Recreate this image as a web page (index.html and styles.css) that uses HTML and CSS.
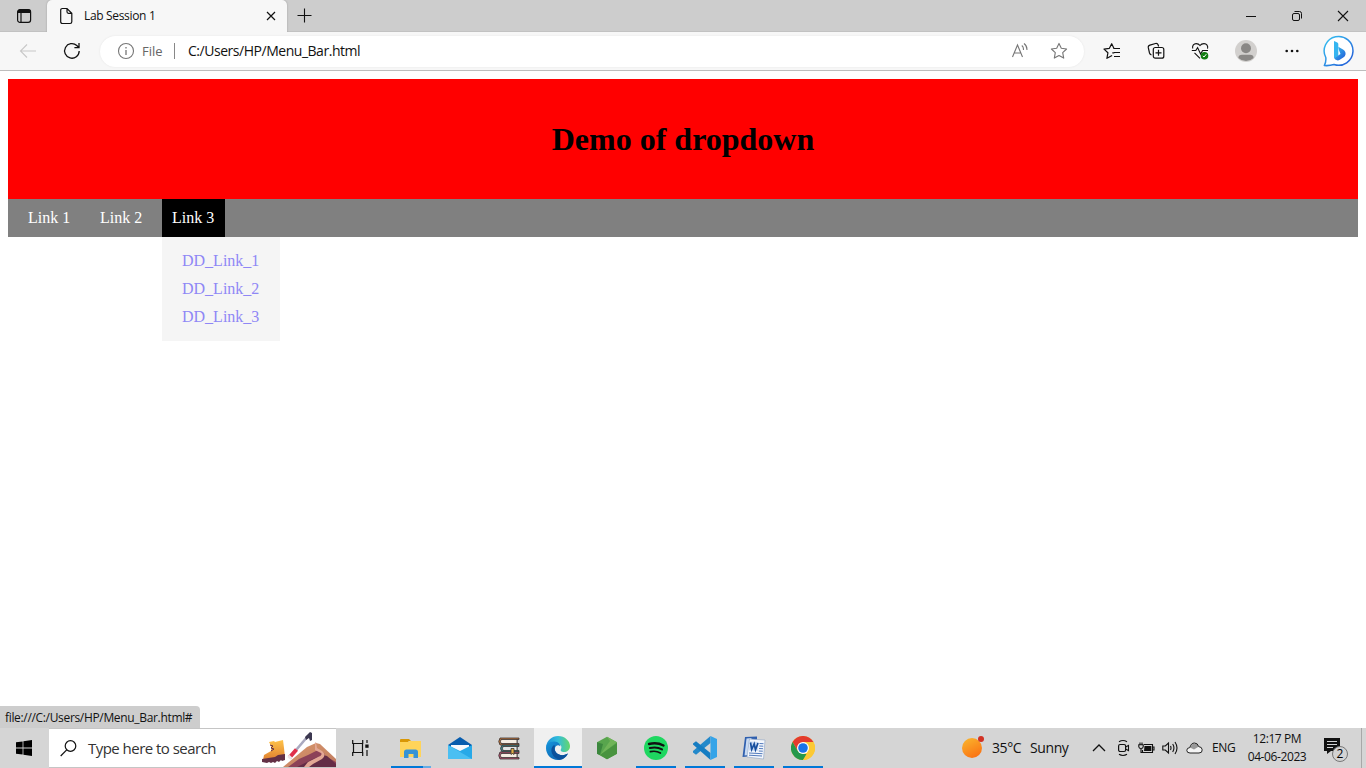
FILE: index.html
```html
<!DOCTYPE html>
<html lang="en">
<head>
<meta charset="utf-8">
<title>Lab Session 1</title>
<link rel="stylesheet" href="styles.css">
</head>
<body>
<div class="screen">
  <header class="tabstrip">
    <svg class="ic workspaces" width="16" height="16" viewBox="0 0 16 16"><rect x="1.6" y="1.6" width="13" height="12.8" rx="2.4" fill="none" stroke="#111" stroke-width="1.2"/><path d="M1.500 5V3.500q0-2 2-2h9.500q2 0 2 2V5z" fill="#111"/><path d="M5 5v9" stroke="#111" stroke-width="1.2"/></svg>
    <div class="tab">
      <svg class="ic" width="14" height="18" viewBox="0 0 14 18"><path d="M1.700 3.200q0-1.700 1.700-1.700H8l4.800 4.800v8.500q0 1.700-1.700 1.700H3.400q-1.700 0-1.700-1.700zM8 1.500v3.300q0 1.500 1.500 1.500h3.300" fill="none" stroke="#111" stroke-width="1.200"/></svg>
      <span class="tab-title">Lab Session 1</span>
      <svg class="ic tab-close" width="10" height="10" viewBox="0 0 10 10"><path d="M1 1l8 8M9 1L1 9" stroke="#111" stroke-width="1.200"/></svg>
    </div>
    <svg class="ic newtab" width="15" height="15" viewBox="0 0 15 15"><path d="M.5 7.500h14M7.500.5v14" stroke="#111" stroke-width="1.100"/></svg>
    <div class="window-controls">
      <svg width="12" height="12" viewBox="0 0 12 12"><path d="M1 6.500h10" stroke="#111"/></svg>
      <svg width="12" height="12" viewBox="0 0 12 12"><rect x="1.500" y="3.500" width="7" height="7" rx="1.500" fill="none" stroke="#111"/><path d="M3.500 1.500h5q2 0 2 2v5" fill="none" stroke="#111"/></svg>
      <svg width="12" height="12" viewBox="0 0 12 12"><path d="M1 1l10 10M11 1L1 11" stroke="#111" stroke-width="1.100"/></svg>
    </div>
  </header>

  <div class="toolbar">
    <svg class="ic back" width="18" height="16" viewBox="0 0 18 16"><path d="M8 1.500L1.500 8 8 14.500M1.500 8H17" fill="none" stroke="#c8c8c8" stroke-width="1.100"/></svg>
    <svg class="ic reload" width="18" height="18" viewBox="0 0 18 18"><path d="M16.200 9a7.300 7.300 0 1 1-2.400-5.500l2 2M16 1v4.600h-4.600" fill="none" stroke="#111" stroke-width="1.300"/></svg>
    <div class="address">
      <svg class="ic" width="18" height="18" viewBox="0 0 18 18"><circle cx="9" cy="9" r="7.500" fill="none" stroke="#767676" stroke-width="1.100"/><path d="M9 8v5M9 5v1.500" stroke="#767676" stroke-width="1.300"/></svg>
      <span class="scheme">File</span>
      <span class="divider"></span>
      <span class="url">C:/Users/HP/Menu_Bar.html</span>
      <svg class="ic read" width="18" height="18" viewBox="0 0 18 18"><path d="M1.500 15L6.500 3l5 12M3.200 11h6.600M10.800 3.500q2 1.600 1.600 4.500M13 1.500q3.300 2.500 2.900 6.500" fill="none" stroke="#767676" stroke-width="1.100"/></svg>
      <svg class="ic" width="18" height="18" viewBox="0 0 18 18"><path d="M9 1.400l2.300 4.900 5.300.7-3.900 3.700 1 5.400L9 13.500l-4.700 2.600 1-5.400L1.400 7l5.300-.7z" fill="none" stroke="#767676" stroke-width="1.100" stroke-linejoin="round"/></svg>
    </div>
    <svg class="ic favs" width="18" height="18" viewBox="0 0 18 18"><path d="M10.500 6.500H17M11 10.500H17M11 14.500H17" stroke="#111" stroke-width="1.200"/><path d="M11 6.500L8.700 1.700 6.400 6.300 1 7.100l3.900 3.700-1 5.500 5.200-2.800M9.300 10.800h2" fill="none" stroke="#111" stroke-width="1.200" stroke-linejoin="round"/></svg>
    <svg class="ic coll" width="18" height="18" viewBox="0 0 18 18"><path d="M4.500 13Q3 12.500 2.500 11L1.300 5.700q-.4-2 1.600-2.600L8.500 1.500q2-.4 2.700 1.500l.4 1.500" fill="none" stroke="#111" stroke-width="1.200"/><rect x="6.300" y="5.500" width="10.500" height="10.700" rx="2" fill="none" stroke="#111" stroke-width="1.200"/><path d="M11.500 7.800v6M8.500 10.800h6" stroke="#111" stroke-width="1.200"/></svg>
    <svg class="ic heart" width="18" height="18" viewBox="0 0 18 18"><path d="M1.700 6.500C1 3.500 3 1.600 5.200 1.600c2 0 3 .8 3.800 1.900.8-1.100 2-1.900 4-1.900 2.600 0 4.400 2.300 3.500 5M3.500 10.800L9 16.300M.8 8.500h4L6.600 5.600l3 6.400 2-3.500H17" fill="none" stroke="#111" stroke-width="1.100"/><circle cx="13.500" cy="13.700" r="3.800" fill="#107c10"/><path d="M11.800 14l1.200 1 2.300-2.800" fill="none" stroke="#fff"/></svg>
    <svg class="ic avatar" width="22" height="22" viewBox="0 0 22 22"><circle cx="11" cy="11" r="11" fill="#d2d0ce"/><circle cx="11" cy="8.200" r="5" fill="#8a8886"/><path d="M3.400 18q0-3.300 3.600-3.300h8q3.600 0 3.600 3.300A11 11 0 0 1 3.400 18" fill="#8a8886"/></svg>
    <svg class="ic dots" width="14" height="4" viewBox="0 0 14 4"><g fill="#111"><circle cx="1.700" cy="2" r="1.300"/><circle cx="7" cy="2" r="1.300"/><circle cx="12.300" cy="2" r="1.300"/></g></svg>
    <svg class="ic bing" width="32" height="32" viewBox="0 0 32 32"><defs><linearGradient id="bg" x1="0" y1="0" x2="1" y2="1"><stop offset="0" stop-color="#35c5f2"/><stop offset="1" stop-color="#2457d6"/></linearGradient></defs><path d="M1.300 30.500Q3.300 27 2.800 22.500A14.400 14.400 0 1 1 11 29.500Q6 31 1.300 30.500z" fill="#fff" stroke="url(#bg)" stroke-width="1.500" stroke-linejoin="round"/><path d="M11 6l3.300 1.500q1 .5 1 1.600V20.500L11.500 23.500Q11 23 11 22z" fill="#35b5f0"/><path d="M15.300 11.800l4.700 2.700q3 1.800 2.500 5-.3 2-2.200 3.100l-3.500 2.200q-2.300 1.300-4.500-.2L11.300 23l6.200-4-1.300-3.200q-.9-2.200-.9-4z" fill="url(#bg)"/></svg>
  </div>

  <main class="page">
    <div class="banner"><h1>Demo of dropdown</h1></div>
    <nav class="menu">
      <a class="menu-link">Link 1</a>
      <a class="menu-link">Link 2</a>
      <div class="dropdown">
        <a class="menu-link active">Link 3</a>
        <div class="dropdown-list"><a>DD_Link_1</a><a>DD_Link_2</a><a>DD_Link_3</a></div>
      </div>
    </nav>
    <div class="status">file:///C:/Users/HP/Menu_Bar.html#</div>
  </main>

  <footer class="taskbar">
    <div class="start"><svg width="16" height="16" viewBox="0 0 16 16"><path d="M0 2.300L6.600 1.400v6.200H0zM7.400 1.200L16 0v7.600H7.400zM0 8.400h6.600v6.200L0 13.700zM7.400 8.400H16V16l-8.600-1.200z"/></svg></div>
    <div class="search">
      <svg width="17" height="17" viewBox="0 0 17 17"><circle cx="10.500" cy="6" r="5.300" fill="none" stroke="#111" stroke-width="1.200"/><path d="M6.700 9.800L.7 16" stroke="#111" stroke-width="1.200"/></svg>
      <span class="search-text">Type here to search</span>
      <svg class="scene" width="75" height="38" viewBox="0 0 75 38"><defs><linearGradient id="boot" x1="0" y1="0" x2="0" y2="1"><stop offset="0" stop-color="#ffc349"/><stop offset="1" stop-color="#df8030"/></linearGradient><linearGradient id="hill" x1="0" y1="0" x2="1" y2="1"><stop offset="0" stop-color="#d9976c"/><stop offset="1" stop-color="#c07c60"/></linearGradient></defs>
        <path d="M8 13l5-1 1 1 8-2 1 8 1 9-6 1-2 1-14 1 1-5 7-4q1-4-2-9z" fill="url(#boot)"/><path d="M1 30l13-2 3-2 7-1v6l-3 1-1-1-2 2-2-1-2 2-2-1-2 1-2-1-2 1-5-1z" fill="#633045"/><path d="M9 16l3 1-2 2 3 1-3 2" fill="none" stroke="#633045"/>
        <path d="M22 38L46 18l9-4 4 1 16 15v8z" fill="url(#hill)"/><path d="M27 38l11-8 9-4 10-5 6 3 1 3 11 6v5z" fill="#8c4258"/><path d="M36 38l16-8 10-4 4 1 9 8v3z" fill="#642c46"/><path d="M54 14l0 7 6 3q2 2-3 4l-10 5-4 5h5l4-3 9-5q5-4 0-8l-5-3-1-6z" fill="#e3a795"/>
        <path d="M30 27L47 7" stroke="#aaa9bf" stroke-width="2.600"/><path d="M28.500 28.500l7-8" stroke="#e0304a" stroke-width="4"/><path d="M27.800 29.400l2-2.300" stroke="#eee4e8" stroke-width="4"/><path d="M44 8l4-4 1-1 2 1v7l-2 1-1-3-3 2z" fill="#3c3850"/></svg>
    </div>
    <div class="taskview"><svg width="17" height="18" viewBox="0 0 17 18"><path d="M.7 1v3.500h10V1M.7 17v-3.500h10V17M1.500 4.500v9M10.500 4.500v9M15 1v3M15 11v6" fill="none" stroke="#111" stroke-width="1.200"/><rect x="13.300" y="5.500" width="3.300" height="3.300" fill="#111"/></svg></div>

    <div class="apps">
      <div class="app open stacked"><svg width="24" height="24" viewBox="0 0 24 24"><path d="M1 4q0-1 1-1h8l2 2h-2l-2 2H1z" fill="#d99705"/><path d="M1 6h8l2-1h11v16H1z" fill="#ffd45a"/><path d="M5 22v-6q0-2.500 2.500-2.500h9q2.500 0 2.500 2.500v6h-4.500v-4h-5v4z" fill="#3793d5"/></svg></div>
      <div class="app"><svg width="24" height="24" viewBox="0 0 24 24"><path d="M0 9L12 1l12 8v6H0z" fill="#075cae"/><path d="M3 9h18v9H3z" fill="#f7f8fc"/><path d="M0 9l12 6 12-6v14H0z" fill="#28a9e8"/><path d="M0 9l24 14H0z" fill="#56c7f5" opacity=".75"/></svg></div>
      <div class="app"><svg width="24" height="24" viewBox="0 0 24 24"><g stroke="#3a3434" stroke-width=".8"><path d="M3 2h19v1.500h-2v4h2V9H3Q.5 5.500 3 2z" fill="#bd7338"/><path d="M4 3.500h16v4H4q-1-2 0-4z" fill="#f5ede2"/><path d="M5 9h17v1.500h-2v4h2V16H5Q2 12.500 5 9z" fill="#398383"/><path d="M6 10.500h14v4H6q-1-2 0-4z" fill="#e4e6e4"/><path d="M3 16h19v1.500h-2v4h2V23H3Q.5 19.500 3 16z" fill="#b34f6c"/><path d="M4 17.500h16v4H4q-1-2 0-4z" fill="#f5ede2"/><path d="M14 12.500h3v6l-1.500-1-1.500 1z" fill="#e0ae45"/></g></svg></div>
      <div class="app current"><svg width="24" height="24" viewBox="0 0 24 24"><defs><linearGradient id="eg"><stop stop-color="#1b8fda"/><stop offset=".5" stop-color="#32bddb"/><stop offset="1" stop-color="#65d76a"/></linearGradient><linearGradient id="eb" x1="0" y1="0" x2="1" y2="1"><stop stop-color="#1695dc"/><stop offset="1" stop-color="#0b55a3"/></linearGradient></defs><path d="M0 11C1 4 6 0 12 0c7 0 12 5 12 10 0 4-3 6-6 6-2.500 0-4-1-3-3 1.500-3-1-5-4-5C6 8 2 9 0 11z" fill="url(#eg)"/><path d="M0 12c0-4 4-7 8.500-6.500 3.500.4 6 2.500 5.800 5-1.500-2-4.500-1.500-5.300 1.500-1 4.500 4 8 9 7l4-1.500C20 22 16 24 12 24 5 24 0 18.500 0 12z" fill="url(#eb)"/><path d="M8 9q-4 3-2 8.500 2 5 8 6.200 4-.2 8-6.200-5 3-9.500.8C8.500 16 8 12.500 9 10z" fill="#0b519b"/></svg></div>
      <div class="app"><svg width="24" height="24" viewBox="0 0 24 24"><path d="M12 .8l10 5.500v11.400L12 23.300 2 17.700V6.300z" fill="#58a54d"/><path d="M2 6.300L8 8l-3 11-3-1.300z" fill="#3c873e"/><path d="M12 .8l10 5.500L5 19 15 5z" fill="#70b458"/><path d="M5 19l17-12v10.700l-10 5.600z" fill="#49933f"/></svg></div>
      <div class="app open"><svg width="24" height="24" viewBox="0 0 24 24"><circle cx="12" cy="12" r="12" fill="#1ed760"/><g fill="none" stroke="#111" stroke-linecap="round"><path d="M5 8q8-2 14.500 1.500" stroke-width="2.400"/><path d="M5.800 12q7-1.700 12.200 1.400" stroke-width="2"/><path d="M6.400 15.700q5.600-1.300 10 1.300" stroke-width="1.700"/></g></svg></div>
      <div class="app open"><svg width="24" height="24" viewBox="0 0 24 24"><path d="M17.500 0v7L3 18.700 0 16.500v-1.600z" fill="#2489ca"/><path d="M0 8.500v-1L3 5.300 17.500 17v7z" fill="#167dc2"/><path d="M17.500 0L24 3v18l-6.500 3z" fill="#36a4e8"/></svg></div>
      <div class="app open"><svg width="24" height="24" viewBox="0 0 24 24"><path d="M3 1l12-.5V3L11 20 .5 21z" fill="#2f5fae"/><path d="M4.500 2.500l5-.5-3 17-4 .5z" fill="#c8daf2"/><path d="M7.500 3l15.500 1-1.500 19L5 21z" fill="#f4f7fc" stroke="#8fa5c5" stroke-width=".6"/><path d="M8 5.500l8.500.5-.7 9-9-.6z" fill="#c9daf3"/><path d="M8.500 6.500l1.200 7L12.200 8l1.300 5.700L16 7" fill="none" stroke="#174f9f" stroke-width="1.700"/><path d="M17.500 7.500l4 .2M17.300 10l4 .2M17 12.500l4 .2M16.800 15l4 .2M7 17l13.500.7M7 19.200l13 .8" stroke="#3f6cb4" stroke-width=".9"/></svg></div>
      <div class="app open"><svg width="24" height="24" viewBox="0 0 24 24"><circle cx="12" cy="12" r="12" fill="#fcc934"/><path d="M1.600 6A12 12 0 0 1 22.400 6H12L6.800 15z" fill="#e33b2e"/><path d="M1.600 6l5.200 9 5.200 3h5.200L12 24A12 12 0 0 1 1.600 6z" fill="#25984b"/><path d="M12 6h10.400A12 12 0 0 1 12 24l5.200-9z" fill="#fcc934"/><circle cx="12" cy="12" r="6" fill="#fff"/><circle cx="12" cy="12" r="4.800" fill="#1a73e8"/></svg></div>
    </div>

    <div class="tray">
      <svg class="sun" width="23" height="24" viewBox="0 0 23 24"><defs><linearGradient id="sun" x1=".2" y1="0" x2=".7" y2="1"><stop stop-color="#fab32c"/><stop offset="1" stop-color="#fa7113"/></linearGradient></defs><circle cx="10" cy="12" r="10" fill="url(#sun)"/><circle cx="19" cy="3" r="3" fill="#d13224"/></svg>
      <span class="temp">35°C</span><span class="weather">Sunny</span>
      <svg class="chevron" width="14" height="8" viewBox="0 0 14 8"><path d="M1 7l6-6 6 6" fill="none" stroke="#111" stroke-width="1.300"/></svg>
      <svg class="camera" width="13" height="18" viewBox="0 0 13 18"><rect x="1.600" y="5.500" width="7" height="7" rx="1.500" fill="none" stroke="#111" stroke-width="1.200"/><path d="M8.500 8l3-1.500v5l-3-1.500M2 2.700q4-2.500 8 0M2 15.300q4 2.500 8 0" fill="none" stroke="#111" stroke-width="1.100"/></svg>
      <svg class="battery" width="17" height="12" viewBox="0 0 17 12"><path d="M6 2.500h8.500v8h-10V8M14.500 5H16v3h-1.500M.8 2.800h4.400v2Q5 6.500 3 6.500T.8 4.800zM2 3V.5M4 3V.5M3 6v4.500h2" fill="none" stroke="#111" stroke-width="1.100"/><path d="M6.500 4h6.800v5H6z" fill="#111"/></svg>
      <svg class="speaker" width="17" height="14" viewBox="0 0 17 14"><path d="M.8 5h2.500L6.500 2v10L3.300 9H.8zM8.500 5q1 2 0 4M10.700 3q2.500 4 0 8M13 1q4 6 0 12" fill="none" stroke="#111" stroke-width="1.100"/></svg>
      <svg class="cloud" width="17" height="12" viewBox="0 0 17 12"><path d="M4 11Q.8 11 .8 8.300q0-2.500 3-2.700Q5 1 8.500 1q3.200 0 4.200 3.600 3.300.2 3.500 3.200.2 3.200-3.200 3.200z" fill="#f4f4f4"/><path d="M4 5.500Q5.500 1.500 8.500 1.500q3 0 4 3.300L8 7.500z" fill="#999"/><path d="M4 11Q.8 11 .8 8.300q0-2.500 3-2.700Q5 1 8.500 1q3.200 0 4.200 3.600 3.300.2 3.500 3.200.2 3.200-3.200 3.200z" fill="none" stroke="#222"/></svg>
      <span class="lang">ENG</span>
      <div class="clock"><span class="time">12:17 PM</span><span class="date">04-06-2023</span></div>
      <svg class="notice" width="26" height="26" viewBox="0 0 26 26"><path d="M1 1h16v13H8l-4 3v-3H1z" fill="#111"/><path d="M4 4.500h10M4 7.500h10M4 10.500h6" stroke="#d3d3d3"/><circle cx="17" cy="17" r="7.500" fill="#d3d3d3" stroke="#777"/><text x="17" y="21" text-anchor="middle" class="badge">2</text></svg>
    </div>
  </footer>
</div>
</body>
</html>
```
FILE: styles.css
```css
* { box-sizing: border-box; }
body { margin: 0; overflow: hidden; background: #fff; }
svg { display: block; flex: none; }
span { white-space: nowrap; }
.screen { width: 1366px; height: 768px; display: flex; flex-direction: column; font: 12px/16px "Open Sans", sans-serif; color: #111; }
.tabstrip { height: 32px; flex: none; display: flex; align-items: center; background: #cdcdcd; border-bottom: 1px solid #c2c2c2; }
.workspaces { margin-left: 16px; }
.tab { width: 240px; height: 32px; margin-left: 15px; padding: 0 11px 0 12px; display: flex; align-items: center; align-self: flex-start; background: #f7f7f7; border-radius: 5px 5px 0 0; box-shadow: 0 0 2px #999; clip-path: inset(0 -3px 0 -3px); }
.tab-title { margin-left: 11px; letter-spacing: -.33px; }
.tab-close { margin-left: auto; }
.newtab { margin-left: 10px; }
.window-controls { margin-left: auto; padding-right: 17px; display: flex; gap: 34px; }
.toolbar { height: 39px; flex: none; display: flex; align-items: center; background: #f7f7f7; border-bottom: 1px solid #bdbdbd; }
.back { margin-left: 19px; }
.reload { margin-left: 26px; }
.address { width: 984px; height: 31px; margin-left: 19px; padding: 0 16px 0 17px; display: flex; align-items: center; background: #fff; border-radius: 16px; box-shadow: 0 0 2px #e3e3e3; font-size: 14px; }
.scheme { width: 32px; margin-left: 7px; color: #666; font-size: 13px; }
.divider { width: 1px; height: 16px; background: #888; }
.url { margin-left: 13px; letter-spacing: -.47px; }
.read { margin-left: auto; margin-right: 21px; }
.favs { margin-left: 19px; }
.coll { margin-left: 26px; }
.heart { margin-left: 26px; }
.avatar { margin-left: 26px; }
.dots { margin-left: 28px; }
.bing { margin-left: 24px; }

.page { flex: 1; min-height: 0; display: flex; flex-direction: column; padding-top: 8px; font: 16px/18px "Liberation Serif", serif; }
.banner { height: 120px; margin: 0 8px; flex: none; display: flex; align-items: center; justify-content: center; background: #f00; color: #000; }
.banner h1 { margin: 0; font-size: 32px; line-height: 36px; }
.menu { height: 38px; margin: 0 8px; padding-left: 10px; flex: none; display: flex; background: gray; }
.menu-link { display: block; width: 63px; height: 38px; padding: 10px; margin-right: 9px; color: #fff; white-space: nowrap; }
.active { background: #000; margin-right: 0; }
.dropdown { position: relative; }
.dropdown-list { position: absolute; top: 38px; left: 0; width: 118px; height: 104px; padding: 10px 20px; background: #f5f5f5; }
.dropdown-list a { display: block; padding: 5px 0; color: #8f87f5; }
.status { width: 200px; height: 22px; margin-top: auto; padding: 4px 5px 2px; background: #cdcdcd; border-radius: 0 4px 0 0; font: 12px/16px "Open Sans", sans-serif; letter-spacing: -.33px; white-space: nowrap; }

.taskbar { height: 40px; flex: none; display: flex; align-items: center; background: #d5d5d5; }
.start { width: 49px; padding-left: 16px; }
.search { width: 287px; height: 40px; padding-left: 11px; display: flex; align-items: center; background: #fff; border-top: 1px solid #c5c5c5; border-bottom: 1px solid #c5c5c5; }
.search-text { margin-left: 11px; font-size: 15px; line-height: 20px; letter-spacing: -.53px; color: #333; }
.scene { margin-left: auto; }
.taskview { margin-left: 16px; width: 35px; }
.apps { height: 40px; display: flex; gap: 1px; }
.app { width: 48px; height: 40px; display: flex; flex-direction: column; align-items: center; padding-top: 8px; }
.app::after { content: ""; width: 40px; height: 2px; margin-top: 6px; }
.open::after { background: #0078d7; }
.stacked::after { background: linear-gradient(90deg, #0078d7 32px, #65ace5 32px); }
.current { background: #f0f0f0; }
.current::after { width: 48px; background: #0078d7; }
.tray { flex: 1; height: 40px; display: flex; align-items: center; margin-right: 4px; border-right: 1px solid #a8a8a8; }
.sun { margin-left: 135px; }
.temp { width: 38px; margin-left: 7px; font-size: 14px; letter-spacing: -.4px; }
.weather { width: 40px; font-size: 14px; letter-spacing: -.4px; }
.chevron { margin-left: 22px; }
.camera { margin-left: 11px; }
.battery { margin-left: 8px; }
.speaker { margin-left: 7px; }
.cloud { margin-left: 7px; }
.lang { width: 24px; margin-left: 9px; letter-spacing: -.4px; }
.clock { width: 60px; margin-left: 11px; display: flex; flex-direction: column; align-items: center; line-height: 18px; letter-spacing: -.4px; }
.notice { margin-left: 16px; margin-top: 4px; }
.badge { font: 12px "Open Sans", sans-serif; }
```
